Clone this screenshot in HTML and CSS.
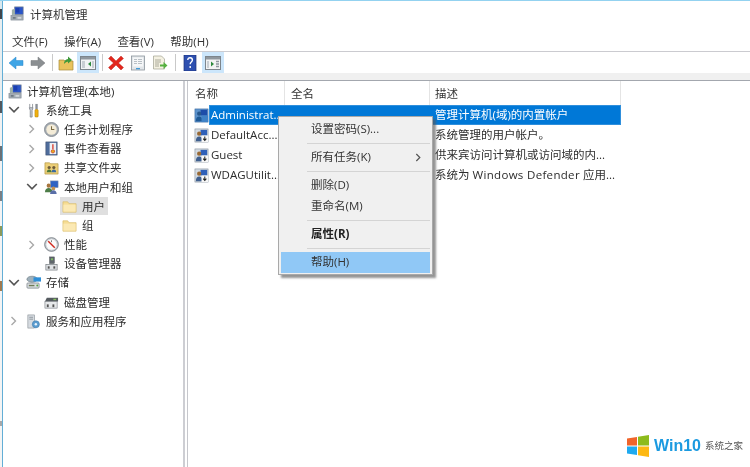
FILE: index.html
```html
<!DOCTYPE html>
<html lang="zh-CN">
<head>
<meta charset="utf-8">
<title>计算机管理</title>
<link rel="stylesheet" href="styles.css">
</head>
<body>
<svg class="sprite" aria-hidden="true">
  <symbol id="i-computer" viewBox="0 0 16 16">
    <rect x="5" y="1" width="9" height="8" fill="#2a55c8" stroke="#6d7a90" stroke-width=".8"/>
    <rect x="6" y="2" width="4" height="5" fill="#1b3fb0"/>
    <path d="M2 4l3-1v6l-3 1z" fill="#9db0a8"/>
    <rect x="1" y="10" width="13" height="5" fill="#a4adb4" stroke="#7d8790" stroke-width=".6"/>
    <rect x="3" y="12" width="3" height="1.4" fill="#5e6a74"/>
    <rect x="8" y="12" width="4" height="1.4" fill="#dfe4e8"/>
  </symbol>
  <symbol id="i-tools" viewBox="0 0 16 16">
    <path d="M4 1v4M7 1v4M3.500 5h4L6.500 8v7h-2V8z" fill="#c8ccd2" stroke="#7b8088" stroke-width=".8"/>
    <rect x="10" y="1" width="2.500" height="6" fill="#8a8f96"/>
    <rect x="9.500" y="7" width="3.500" height="8" rx="1" fill="#f0b010" stroke="#a87a08" stroke-width=".5"/>
  </symbol>
  <symbol id="i-clock" viewBox="0 0 16 16">
    <circle cx="8" cy="8" r="7.500" fill="#a7adb3" stroke="#777f86" stroke-width=".8"/>
    <circle cx="8" cy="8" r="5.600" fill="#f4ecd8"/>
    <path d="M8 4.500V8h3" fill="none" stroke="#7a6a40" stroke-width="1.100"/>
  </symbol>
  <symbol id="i-event" viewBox="0 0 16 16">
    <rect x="2" y="1" width="12" height="14" fill="#4f6d9c" stroke="#36486a" stroke-width=".6"/>
    <rect x="6" y="2" width="7" height="12" fill="#eceff4"/>
    <path d="M9.500 3.500v5" stroke="#d83a2a" stroke-width="1.400"/>
    <circle cx="9.500" cy="11" r="1.800" fill="#e8b020" stroke="#c83020" stroke-width=".7"/>
  </symbol>
  <symbol id="i-share" viewBox="0 0 16 16">
    <path d="M1 3h5l1 1h8v11H1z" fill="#eccf78" stroke="#b09440" stroke-width=".7"/>
    <circle cx="5.500" cy="8" r="1.700" fill="#6a5a3a"/>
    <path d="M3 13c0-2 1-3 2.500-3S8 11 8 13z" fill="#4a7a3a"/>
    <circle cx="10.500" cy="8" r="1.700" fill="#6a5a3a"/>
    <path d="M8 13c0-2 1-3 2.500-3s2.500 1 2.500 3z" fill="#3a6aa0"/>
  </symbol>
  <symbol id="i-users" viewBox="0 0 16 16">
    <rect x="7" y="1" width="8" height="7" fill="#2f63c4" stroke="#7b8ca8" stroke-width=".6"/>
    <circle cx="5" cy="6" r="2.200" fill="#a8763e"/>
    <path d="M1 13c0-3 2-4.500 4-4.500S9 10 9 13z" fill="#4d7d48"/>
    <circle cx="10" cy="9" r="2" fill="#c09050"/>
    <path d="M6.500 15c0-2.500 1.500-4 3.500-4s3.500 1.500 3.500 4z" fill="#5a6fa8"/>
  </symbol>
  <symbol id="i-folder" viewBox="0 0 16 16">
    <path d="M1 3h5l1.500 2H15v9H1z" fill="#f6dd94" stroke="#d6b866" stroke-width=".7"/>
    <path d="M1.500 6h13v7.500h-13z" fill="#fbe9b4"/>
  </symbol>
  <symbol id="i-perf" viewBox="0 0 16 16">
    <circle cx="8" cy="8" r="7.300" fill="#c9ced3" stroke="#70777e" stroke-width=".9"/>
    <circle cx="8" cy="8" r="5.500" fill="#fbfbfb"/>
    <path d="M4.500 4.500l7 7" stroke="#d0281c" stroke-width="1.500"/>
    <path d="M8 3.500v2" stroke="#555" stroke-width=".8"/>
  </symbol>
  <symbol id="i-device" viewBox="0 0 16 16">
    <rect x="6" y="1" width="5" height="7" fill="#5f666c" stroke="#3c4246" stroke-width=".5"/>
    <rect x="7.500" y="2.500" width="2" height="2" fill="#7fc060"/>
    <rect x="2" y="9" width="12" height="6" fill="#dfe2e5" stroke="#70767c" stroke-width=".7"/>
    <rect x="4" y="11" width="2" height="2.500" fill="#555"/>
    <rect x="10" y="11" width="2" height="2.500" fill="#555"/>
  </symbol>
  <symbol id="i-storage" viewBox="0 0 16 16">
    <ellipse cx="6.500" cy="4.500" rx="5.500" ry="3.200" fill="#9fb0bb" stroke="#6f7f88" stroke-width=".7"/>
    <rect x="8" y="2.500" width="8" height="4.500" fill="#2e8fd8"/>
    <rect x="1" y="8.500" width="13" height="5.500" rx="1" fill="#d7dcdf" stroke="#6f777d" stroke-width=".7"/>
    <rect x="3" y="10.500" width="6" height="1.500" fill="#6f7a55"/>
    <circle cx="12" cy="11.200" r="1" fill="#55a040"/>
  </symbol>
  <symbol id="i-disk" viewBox="0 0 16 16">
    <path d="M3 3h12v4H1z" fill="#555b60"/>
    <rect x="10" y="4" width="3" height="1.500" fill="#86c060"/>
    <rect x="1" y="7" width="13" height="7" fill="#e6e8ea" stroke="#6c7278" stroke-width=".6"/>
    <rect x="3" y="10" width="2" height="3" fill="#555"/>
    <rect x="9" y="10" width="2" height="3" fill="#555"/>
  </symbol>
  <symbol id="i-services" viewBox="0 0 16 16">
    <rect x="2" y="1" width="7" height="14" fill="#d6dbe0" stroke="#7d858c" stroke-width=".6"/>
    <path d="M3.500 3.500h4M3.500 5.500h4" stroke="#7d858c" stroke-width=".8"/>
    <circle cx="10.500" cy="11" r="3.800" fill="#5b9ccf" stroke="#3c7bad" stroke-width=".6"/>
    <circle cx="10.500" cy="11" r="1.300" fill="#e8f2fa"/>
  </symbol>
  <symbol id="i-user" viewBox="0 0 16 16">
    <rect x="1" y="1" width="14" height="14" fill="#d4dbe2" stroke="#7e8a96" stroke-width=".6"/>
    <rect x="7" y="2" width="7" height="6" fill="#2e5fb8"/>
    <circle cx="5.500" cy="6" r="2.300" fill="#9a6a36"/>
    <path d="M2 14c0-3.500 1.500-5 3.500-5S9 10.500 9 14z" fill="#3f5f8f"/>
    <rect x="8" y="8" width="7" height="7" fill="#f7f7f7"/>
    <path d="M11.500 9v4M9.800 11.300l1.700 2 1.700-2" fill="none" stroke="#222" stroke-width="1.100"/>
  </symbol>
  <symbol id="i-user-sel" viewBox="0 0 16 16">
    <rect x="1" y="1" width="14" height="14" fill="#5d93cc" stroke="#39699e" stroke-width=".6"/>
    <rect x="7" y="2" width="7" height="6" fill="#1d4da8"/>
    <circle cx="5.500" cy="6" r="2.300" fill="#27588e"/>
    <path d="M2 14c0-3.500 1.500-5 3.500-5S9 10.500 9 14z" fill="#1f5a96"/>
    <rect x="8" y="8" width="7" height="7" fill="#3f82c6"/>
  </symbol>
  <symbol id="i-back" viewBox="0 0 16 16">
    <path d="M1 8l7-6v3.500h7v5H8V14z" fill="#3fa5e6" stroke="#2a86c8" stroke-width=".5"/>
  </symbol>
  <symbol id="i-forward" viewBox="0 0 16 16">
    <path d="M15 8L8 2v3.500H1v5h7V14z" fill="#8b8f92" stroke="#76797c" stroke-width=".5"/>
  </symbol>
  <symbol id="i-up" viewBox="0 0 16 16">
    <path d="M1 5h5l1 1h8v9H1z" fill="#e9c35c" stroke="#a68a3a" stroke-width=".7"/>
    <path d="M6 9c0-3 1.500-4.500 4-5V1.500L14 5l-4 3.500V6.500C8 7 7 8 6 9z" fill="#3f9a3a"/>
  </symbol>
  <symbol id="i-pane-l" viewBox="0 0 16 14">
    <rect x=".5" y=".5" width="15" height="13" fill="#f2f3f4" stroke="#7d858c"/>
    <rect x="1" y="1" width="14" height="2.500" fill="#8f979e"/>
    <rect x="2" y="5" width="3" height="7" fill="#c9ced3"/>
    <path d="M11 5.500v5L8 8z" fill="#2e8a3e"/>
    <rect x="12" y="5" width="2" height="7" fill="#c9ced3"/>
  </symbol>
  <symbol id="i-pane-r" viewBox="0 0 16 14">
    <rect x=".5" y=".5" width="15" height="13" fill="#f2f3f4" stroke="#7d858c"/>
    <rect x="1" y="1" width="14" height="2.500" fill="#8f979e"/>
    <rect x="2" y="5" width="2" height="7" fill="#c9ced3"/>
    <path d="M6 5.500v5L9 8z" fill="#2e8a3e"/>
    <path d="M11 5.500h3M11 8h3M11 10.500h3" stroke="#8f979e" stroke-width="1.400"/>
  </symbol>
  <symbol id="i-delete" viewBox="0 0 16 16">
    <path d="M.5 3.500L3 1l5 5 5-5 2.500 2.500-5 4.500 5 4.500L13 15 8 10l-5 5-2.500-2.500 5-4.500z" fill="#e2271d" stroke="#b01a12" stroke-width=".4"/>
  </symbol>
  <symbol id="i-props" viewBox="0 0 16 16">
    <rect x="1.500" y="1" width="13" height="14" fill="#e2e6ea" stroke="#8c949c" stroke-width=".8"/>
    <rect x="3" y="2.500" width="10" height="9" fill="#f6f7f8"/>
    <path d="M4 4.500h3M8 4.500h4M4 6.500h3M8 6.500h4M4 8.500h3M8 8.500h4" stroke="#a8b0b8" stroke-width=".8"/>
    <rect x="6" y="13" width="4" height="1.300" fill="#3f9ad8"/>
  </symbol>
  <symbol id="i-export" viewBox="0 0 16 16">
    <path d="M1.500 1h8l3 3v10h-11z" fill="#f4f1e2" stroke="#a0a090" stroke-width=".7"/>
    <path d="M3 5h6M3 7h6M3 9h4M3 11h4" stroke="#9a9a8c" stroke-width=".8"/>
    <path d="M8 9.500h3.500V7l4 3.500-4 3.500v-2.500H8z" fill="#55b040"/>
  </symbol>
  <symbol id="i-help" viewBox="0 0 16 16">
    <rect x="2" y="0" width="12" height="16" fill="#2e50b0" stroke="#1d3378" stroke-width=".7"/>
    <path d="M5.800 5c0-1.500 1-2.200 2.300-2.200S10.400 3.600 10.400 5c0 2-2.200 2-2.200 4.200M8.200 11v2" fill="none" stroke="#fff" stroke-width="1.400"/>
  </symbol>
  <symbol id="i-open" viewBox="0 0 8 10"><path d="M1.500 1l4 4-4 4" fill="none" stroke="#a8a8a8" stroke-width="1.400"/></symbol>
  <symbol id="i-sub" viewBox="0 0 8 10"><path d="M1.500 1l4 4-4 4" fill="none" stroke="#555" stroke-width="1.400"/></symbol>
  <symbol id="i-expanded" viewBox="0 0 10 8"><path d="M1 1.500l4 4 4-4" fill="none" stroke="#555" stroke-width="1.400"/></symbol>
</svg>

<div class="page">
  <div class="edge"></div>
  <main class="window">
    <header class="titlebar">
      <svg class="title-icon"><use href="#i-computer"/></svg>
      <span>计算机管理</span>
    </header>
    <nav class="menubar">
      <span>文件(F)</span><span>操作(A)</span><span>查看(V)</span><span>帮助(H)</span>
    </nav>
    <div class="toolbar">
      <button class="tool"><svg class="ticon"><use href="#i-back"/></svg></button>
      <button class="tool"><svg class="ticon"><use href="#i-forward"/></svg></button>
      <i class="sep"></i>
      <button class="tool"><svg class="ticon"><use href="#i-up"/></svg></button>
      <button class="tool on"><svg class="ticon"><use href="#i-pane-l"/></svg></button>
      <i class="sep"></i>
      <button class="tool"><svg class="ticon"><use href="#i-delete"/></svg></button>
      <button class="tool"><svg class="ticon"><use href="#i-props"/></svg></button>
      <button class="tool"><svg class="ticon"><use href="#i-export"/></svg></button>
      <i class="sep wide"></i>
      <button class="tool"><svg class="ticon"><use href="#i-help"/></svg></button>
      <button class="tool on gap"><svg class="ticon"><use href="#i-pane-r"/></svg></button>
    </div>
    <div class="strip"></div>
    <div class="panes">
      <ul class="tree">
        <li class="row l0"><span class="node"><svg class="icon"><use href="#i-computer"/></svg>计算机管理(本地)</span></li>
        <li class="row l1"><svg class="chev"><use href="#i-expanded"/></svg><span class="node"><svg class="icon"><use href="#i-tools"/></svg>系统工具</span></li>
        <li class="row l2"><svg class="chev"><use href="#i-open"/></svg><span class="node"><svg class="icon"><use href="#i-clock"/></svg>任务计划程序</span></li>
        <li class="row l2"><svg class="chev"><use href="#i-open"/></svg><span class="node"><svg class="icon"><use href="#i-event"/></svg>事件查看器</span></li>
        <li class="row l2"><svg class="chev"><use href="#i-open"/></svg><span class="node"><svg class="icon"><use href="#i-share"/></svg>共享文件夹</span></li>
        <li class="row l2"><svg class="chev"><use href="#i-expanded"/></svg><span class="node"><svg class="icon"><use href="#i-users"/></svg>本地用户和组</span></li>
        <li class="row l3"><span class="chev"></span><span class="node selected"><svg class="icon"><use href="#i-folder"/></svg>用户</span></li>
        <li class="row l3"><span class="chev"></span><span class="node"><svg class="icon"><use href="#i-folder"/></svg>组</span></li>
        <li class="row l2"><svg class="chev"><use href="#i-open"/></svg><span class="node"><svg class="icon"><use href="#i-perf"/></svg>性能</span></li>
        <li class="row l2"><span class="chev"></span><span class="node"><svg class="icon"><use href="#i-device"/></svg>设备管理器</span></li>
        <li class="row l1"><svg class="chev"><use href="#i-expanded"/></svg><span class="node"><svg class="icon"><use href="#i-storage"/></svg>存储</span></li>
        <li class="row l2"><span class="chev"></span><span class="node"><svg class="icon"><use href="#i-disk"/></svg>磁盘管理</span></li>
        <li class="row l1"><svg class="chev"><use href="#i-open"/></svg><span class="node"><svg class="icon"><use href="#i-services"/></svg>服务和应用程序</span></li>
      </ul>
      <div class="splitter"></div>
      <section class="list">
        <div class="list-head">
          <span class="col-name">名称</span>
          <span class="col-full">全名</span>
          <span class="col-desc">描述</span>
        </div>
        <div class="item">
          <svg class="icon"><use href="#i-user-sel"/></svg>
          <div class="cells selected-row"><span class="c-name">Administrat...</span><span class="c-full"></span><span class="c-desc">管理计算机(域)的内置帐户</span></div>
        </div>
        <div class="item">
          <svg class="icon"><use href="#i-user"/></svg>
          <div class="cells"><span class="c-name">DefaultAcc...</span><span class="c-full"></span><span class="c-desc">系统管理的用户帐户。</span></div>
        </div>
        <div class="item">
          <svg class="icon"><use href="#i-user"/></svg>
          <div class="cells"><span class="c-name">Guest</span><span class="c-full"></span><span class="c-desc">供来宾访问计算机或访问域的内...</span></div>
        </div>
        <div class="item">
          <svg class="icon"><use href="#i-user"/></svg>
          <div class="cells"><span class="c-name">WDAGUtilit...</span><span class="c-full"></span><span class="c-desc">系统为 <span class="wide-latin">Windows Defender</span> 应用...</span></div>
        </div>
      </section>
    </div>
  </main>
</div>

<div class="context">
  <div class="mi">设置密码(S)...</div>
  <div class="ms"></div>
  <div class="mi has-sub">所有任务(K)<svg class="sub"><use href="#i-sub"/></svg></div>
  <div class="ms"></div>
  <div class="mi">删除(D)</div>
  <div class="mi">重命名(M)</div>
  <div class="ms"></div>
  <div class="mi strong">属性(R)</div>
  <div class="ms"></div>
  <div class="mi hot">帮助(H)</div>
</div>

<div class="brand">
  <svg class="brand-logo" viewBox="0 0 22 22">
    <path d="M0 3.500L10 2v8.500H0z" fill="#f0642a"/>
    <path d="M11 1.800L22 0v10.500H11z" fill="#8dbb1c"/>
    <path d="M0 11.500h10V20L0 18.500z" fill="#1eaaf0"/>
    <path d="M11 11.500h11V22l-11-1.800z" fill="#fdb813"/>
  </svg>
  <span class="brand-win">Win10</span>
  <span class="brand-cn">系统之家</span>
</div>
</body>
</html>
```
FILE: styles.css
```css
* { box-sizing: border-box; }
html, body { margin: 0; padding: 0; height: 100%; background: #fff; overflow: hidden; }
body {
  font-family: "Open Sans", "Noto Sans CJK SC", sans-serif;
  font-size: 11.5px;
  color: #2c2c2c;
  position: relative;
  filter: blur(.35px);
}
.sprite { position: absolute; width: 0; height: 0; }
.page { display: flex; height: 467px; border-top: 1px solid #93d2f0; }
.edge {
  width: 3px;
  flex: none;
  border-right: 1px solid #63aed6;
  background: linear-gradient(#d8e8ee 0 8px, #40464c 8px 18px, #e8eef0 18px 100px, #52585e 100px 112px, #f2f2f2 112px 145px, #6a7076 145px 160px, #f2f2f2 160px 190px, #7a7f84 190px 200px, #f4f4f4 200px 225px, #8c9a5a 225px 235px, #f4f4f4 235px 280px, #a07a50 280px 290px, #f4f4f4 290px 420px, #a8a8a8 420px 425px, #f4f4f4 425px);
}
.window { flex: 1; display: flex; flex-direction: column; min-width: 0; }
.titlebar { height: 26px; display: flex; align-items: center; gap: 5px; padding: 0 0 1px 7px; color: #333; }
.title-icon { width: 15px; height: 15px; }
.menubar { height: 25px; display: flex; align-items: center; gap: 16.3px; padding: 3px 0 0 9px; border-bottom: 1px solid #cbcbd0; color: #333; }
.toolbar { height: 21px; display: flex; align-items: center; padding-left: 2px; background: #fff; }
.tool { width: 22px; height: 21px; padding: 0; border: 0; background: none; display: flex; align-items: center; justify-content: center; }
.tool.on { background: #cce6fb; }
.tool.gap { margin-left: 1px; }
.ticon { width: 16px; height: 16px; }
.sep { width: 6px; height: 17px; flex: none; display: flex; justify-content: center; }
.sep::before { content: ""; width: 1px; background: #c9c9c9; }
.sep.wide { width: 8px; }
.strip { height: 7px; background: #f0f0f0; }
.panes { flex: 1; display: flex; min-height: 0; border-top: 1px solid #a3a7ae; }
.tree { width: 180px; flex: none; margin: 0; padding: .5px 0 0; list-style: none; }
.row { height: 19.2px; display: flex; align-items: center; line-height: 17px; white-space: nowrap; }
.l0 { padding-left: 5px; }
.l1 { padding-left: 5px; }
.l2 { padding-left: 23px; }
.l3 { padding-left: 41px; }
.chev { width: 12px; height: 10px; margin-right: 6px; flex: none; }
.node { display: flex; align-items: center; gap: 5px; padding: 0 3px 0 0; height: 18px; }
.l0 .node { gap: 4px; }
.icon { width: 15px; height: 15px; flex: none; }
.selected { background: #dfdfdf; padding-left: 2px; margin-left: -2px; }
.splitter { width: 5px; flex: none; background: #fff; border-left: 2px solid #cdced3; border-right: 1px solid #c6c7cc; }
.list { flex: 1; min-width: 0; }
.list-head { height: 24px; display: flex; align-items: center; color: #333; }
.list-head span { height: 100%; display: flex; align-items: center; border-right: 1px solid #e4e4e4; padding-left: 7px; flex: none; }
.list-head .col-name { width: 97px; }
.list-head .col-full { width: 145px; padding-left: 6px; }
.list-head .col-desc { width: 191px; padding-left: 5px; }
.item { height: 20px; display: flex; align-items: center; padding-left: 6px; }
.cells { display: flex; align-items: center; height: 100%; width: 412px; white-space: nowrap; line-height: 20px; }
.selected-row { background: #0078d7; color: #fff; box-shadow: inset 0 0 0 1px #2f8fdc; }
.c-name { width: 76px; padding-left: 2px; overflow: hidden; }
.c-full { width: 145px; }
.c-desc { width: 191px; padding-left: 5px; }
.wide-latin { letter-spacing: .32px; }
.context {
  position: absolute;
  left: 278px;
  top: 116px;
  width: 155px;
  padding: 2px 2px 1px;
  background: #f0f0f0;
  border: 1px solid #a9a9a9;
  box-shadow: 3px 3px 2px rgba(90, 90, 90, .65);
  color: #333;
}
.mi { height: 21px; line-height: 20px; padding-left: 30px; white-space: nowrap; position: relative; }
.ms { height: 1px; margin: 3px 0 3px 26px; background: #d4d4d4; }
.has-sub .sub { position: absolute; right: 8px; top: 6px; width: 7px; height: 9px; }
.strong { font-weight: 700; color: #222; }
.hot { background: #90c8f6; }
.brand { position: absolute; left: 627px; top: 435px; display: flex; align-items: center; height: 22px; }
.brand-logo { width: 22px; height: 22px; flex: none; }
.brand-win { margin-left: 5px; font-family: "Liberation Sans", sans-serif; font-weight: 700; font-size: 16px; line-height: 22px; color: #1b9ae0; }
.brand-cn { margin-left: 4px; font-size: 9.5px; line-height: 22px; color: #555; }
```
